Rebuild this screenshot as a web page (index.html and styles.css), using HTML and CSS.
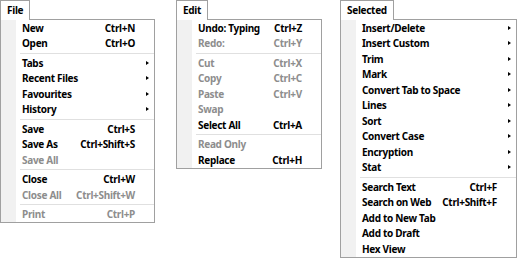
FILE: index.html
```html
<!DOCTYPE html>
<html>
<head>
    <link rel="stylesheet" href="styles.css">
</head>
<body>
    <div class="menus">
        <div class="menu menu-file">
            <div class="tab">File</div>
            <div class="dropdown">
                <div class="item"><span class="label">New</span><span class="key">Ctrl+N</span><span class="arrow"></span></div>
                <div class="item"><span class="label">Open</span><span class="key">Ctrl+O</span><span class="arrow"></span></div>
                <div class="sep"></div>
                <div class="item"><span class="label">Tabs</span><span class="key"></span><span class="arrow sub"></span></div>
                <div class="item"><span class="label">Recent Files</span><span class="key"></span><span class="arrow sub"></span></div>
                <div class="item"><span class="label">Favourites</span><span class="key"></span><span class="arrow sub"></span></div>
                <div class="item"><span class="label">History</span><span class="key"></span><span class="arrow sub"></span></div>
                <div class="sep"></div>
                <div class="item"><span class="label">Save</span><span class="key">Ctrl+S</span><span class="arrow"></span></div>
                <div class="item"><span class="label">Save As</span><span class="key">Ctrl+Shift+S</span><span class="arrow"></span></div>
                <div class="item disabled"><span class="label">Save All</span><span class="key"></span><span class="arrow"></span></div>
                <div class="sep"></div>
                <div class="item"><span class="label">Close</span><span class="key">Ctrl+W</span><span class="arrow"></span></div>
                <div class="item disabled"><span class="label">Close All</span><span class="key">Ctrl+Shift+W</span><span class="arrow"></span></div>
                <div class="sep"></div>
                <div class="item disabled"><span class="label">Print</span><span class="key">Ctrl+P</span><span class="arrow"></span></div>
            </div>
        </div>

        <div class="menu menu-edit">
            <div class="tab">Edit</div>
            <div class="dropdown">
                <div class="item"><span class="label">Undo: Typing</span><span class="key">Ctrl+Z</span><span class="arrow"></span></div>
                <div class="item disabled"><span class="label">Redo:</span><span class="key">Ctrl+Y</span><span class="arrow"></span></div>
                <div class="sep"></div>
                <div class="item disabled"><span class="label">Cut</span><span class="key">Ctrl+X</span><span class="arrow"></span></div>
                <div class="item disabled"><span class="label">Copy</span><span class="key">Ctrl+C</span><span class="arrow"></span></div>
                <div class="item disabled"><span class="label">Paste</span><span class="key">Ctrl+V</span><span class="arrow"></span></div>
                <div class="item disabled"><span class="label">Swap</span><span class="key"></span><span class="arrow"></span></div>
                <div class="item"><span class="label">Select All</span><span class="key">Ctrl+A</span><span class="arrow"></span></div>
                <div class="sep"></div>
                <div class="item disabled"><span class="label">Read Only</span><span class="key"></span><span class="arrow"></span></div>
                <div class="item"><span class="label">Replace</span><span class="key">Ctrl+H</span><span class="arrow"></span></div>
            </div>
        </div>

        <div class="menu menu-selected">
            <div class="tab">Selected</div>
            <div class="dropdown">
                <div class="item"><span class="label">Insert/Delete</span><span class="key"></span><span class="arrow sub"></span></div>
                <div class="item"><span class="label">Insert Custom</span><span class="key"></span><span class="arrow sub"></span></div>
                <div class="item"><span class="label">Trim</span><span class="key"></span><span class="arrow sub"></span></div>
                <div class="item"><span class="label">Mark</span><span class="key"></span><span class="arrow sub"></span></div>
                <div class="item"><span class="label">Convert Tab to Space</span><span class="key"></span><span class="arrow sub"></span></div>
                <div class="item"><span class="label">Lines</span><span class="key"></span><span class="arrow sub"></span></div>
                <div class="item"><span class="label">Sort</span><span class="key"></span><span class="arrow sub"></span></div>
                <div class="item"><span class="label">Convert Case</span><span class="key"></span><span class="arrow sub"></span></div>
                <div class="item"><span class="label">Encryption</span><span class="key"></span><span class="arrow sub"></span></div>
                <div class="item"><span class="label">Stat</span><span class="key"></span><span class="arrow sub"></span></div>
                <div class="sep"></div>
                <div class="item"><span class="label">Search Text</span><span class="key">Ctrl+F</span><span class="arrow"></span></div>
                <div class="item"><span class="label">Search on Web</span><span class="key">Ctrl+Shift+F</span><span class="arrow"></span></div>
                <div class="item"><span class="label">Add to New Tab</span><span class="key"></span><span class="arrow"></span></div>
                <div class="item"><span class="label">Add to Draft</span><span class="key"></span><span class="arrow"></span></div>
                <div class="item"><span class="label">Hex View</span><span class="key"></span><span class="arrow"></span></div>
            </div>
        </div>
    </div>
</body>
</html>
```

FILE: styles.css
```css
body {
    font-family: "Noto Sans", Arial, sans-serif;
    font-size: 10px;
    font-weight: 700;
    letter-spacing: -0.3px;
    color: #000;
    background-color: #fff;
    margin: 0;
    padding: 0;
}

.menus {
    display: flex;
    align-items: flex-start;
}

.menu {
    display: flex;
    flex-direction: column;
    align-items: flex-start;
}

.menu-file {
    width: 155px;
}

.menu-edit {
    width: 146px;
    margin-left: 21px;
}

.menu-selected {
    width: 177px;
    margin-left: 18px;
}

.tab {
    height: 20px;
    line-height: 19px;
    padding: 0 6px 1px;
    border: 1px solid #a0a0a0;
    border-bottom: none;
    background-color: #fff;
    box-sizing: border-box;
    position: relative;
    z-index: 1;
    margin-bottom: -1px;
}

.dropdown {
    align-self: stretch;
    border: 1px solid #a0a0a0;
    background: linear-gradient(to right, #f1f1f1 0, #f1f1f1 15px, #fff 15px);
}

.item {
    display: grid;
    grid-template-columns: 1fr auto 19px;
    align-items: center;
    height: 15.5px;
    padding-left: 21px;
    white-space: nowrap;
}

.item.disabled {
    color: #8d8d8d;
}

.key {
    text-align: right;
    padding-left: 8px;
}

.arrow.sub {
    justify-self: start;
    margin-left: 11px;
    width: 0;
    height: 0;
    border-top: 2.5px solid transparent;
    border-bottom: 2.5px solid transparent;
    border-left: 3px solid #000;
}

.sep {
    height: 4px;
    margin-left: 19px;
    display: flex;
    align-items: center;
}

.sep::before {
    content: "";
    flex: 1;
    height: 1px;
    background-color: #e0e0e0;
}
```
